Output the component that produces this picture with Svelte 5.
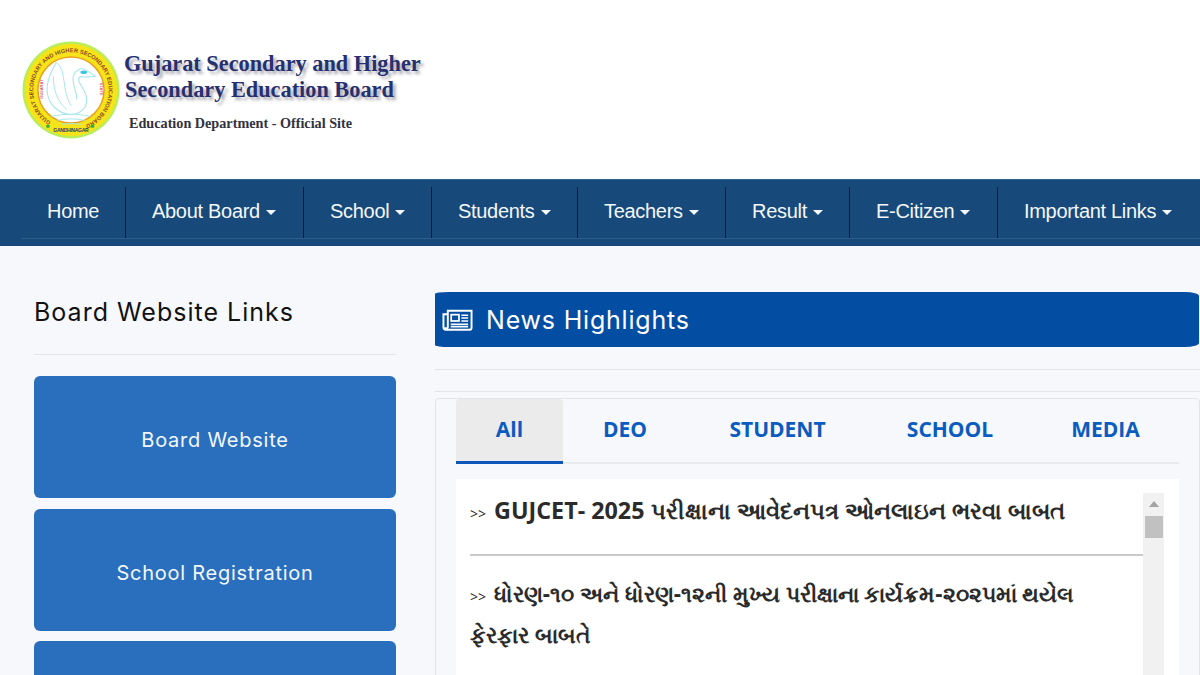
<script>
    const navItems = [
        { label: 'Home', width: 104, caret: false },
        { label: 'About Board', width: 178, caret: true },
        { label: 'School', width: 128, caret: true },
        { label: 'Students', width: 146, caret: true },
        { label: 'Teachers', width: 148, caret: true },
        { label: 'Result', width: 124, caret: true },
        { label: 'E-Citizen', width: 148, caret: true },
        { label: 'Important Links', width: 203, caret: true }
    ];

    const tabs = [
        { label: 'All', width: 107 },
        { label: 'DEO', width: 124 },
        { label: 'STUDENT', width: 181 },
        { label: 'SCHOOL', width: 164 },
        { label: 'MEDIA', width: 147 }
    ];

    // third card runs off the bottom of the page before its label shows
    const links = ['Board Website', 'School Registration', ''];

    const news = [
        'GUJCET- 2025 પરીક્ષાના આવેદનપત્ર ઓનલાઇન ભરવા બાબત',
        'ધોરણ-૧૦ અને ધોરણ-૧૨ની મુખ્ય પરીક્ષાના કાર્યક્રમ-૨૦૨૫માં થયેલ ફેરફાર બાબતે'
    ];
</script>

<div class="page">
    <header class="top">
        <svg class="seal" viewBox="0 0 100 100" aria-hidden="true">
            <defs>
                <path id="ring" d="M50 50 m-38.5 0 a38.5 38.5 0 1 1 77 0 a38.5 38.5 0 1 1 -77 0" />
            </defs>
            <circle cx="50" cy="50" r="49.5" fill="#b9ee5a" />
            <circle cx="50" cy="50" r="47" fill="#f6e31a" />
            <circle cx="50" cy="50" r="34.5" fill="#e8a020" />
            <circle cx="50" cy="50" r="33" fill="#fff" />
            <text class="ring-text" font-size="5.8" transform="rotate(-58 50 50)">
                <textPath href="#ring" textLength="205">GUJARAT SECONDARY AND HIGHER SECONDARY EDUCATION BOARD</textPath>
            </text>
            <text class="ring-small" x="50" y="92.5" font-size="5.2" text-anchor="middle" textLength="36">GANDHINAGAR</text>
            <circle cx="26.5" cy="87" r="1.8" fill="#2bb24c" />
            <circle cx="72" cy="87" r="1.8" fill="#2bb24c" />
            <path d="M35 22 C28 34 24 44 26 54 C28 66 38 74 49 75 C60 75 66 68 66 60 C66 52 60 46 58 41 C57 37 60 35 64 37 L75 36 L66 30 C60 26 53 30 52 38 C52 46 56 52 56 60" fill="none" stroke="#a6e6ee" stroke-width="1.1" />
            <path d="M35 22 C46 30 40 50 50 66 M32 36 C32 50 36 62 46 70" fill="none" stroke="#a6e6ee" stroke-width="1" />
            <path d="M30 77 C42 74 58 74 70 77 M36 81 C44 79 56 79 64 81 M40 85 C46 84 54 84 60 85" fill="none" stroke="#a6e6ee" stroke-width="1" />
            <ellipse cx="63" cy="32" rx="3.4" ry="1.8" fill="#38c5e6" />
            <text class="side" x="21" y="49" font-size="4.2" transform="rotate(-90 21 49)" text-anchor="middle">GUJARAT</text>
            <text class="side" x="80" y="49" font-size="4.2" transform="rotate(90 80 49)" text-anchor="middle">STATE</text>
        </svg>
        <div class="brand">
            <div class="brand-name">Gujarat Secondary and Higher</div>
            <div class="brand-name second">Secondary Education Board</div>
            <div class="brand-sub">Education Department - Official Site</div>
        </div>
    </header>

    <nav class="nav">
        <ul class="nav-list">
            {#each navItems as item, i}
                <li class="nav-item" class:first={i === 0} style="width: {item.width}px">
                    {item.label}{#if item.caret}<span class="caret"></span>{/if}
                </li>
            {/each}
        </ul>
    </nav>

    <main class="content">
        <aside class="side-col">
            <h2 class="side-title">Board Website Links</h2>
            <hr class="rule" />
            <div class="link-list">
                {#each links as link}
                    <a class="link-card" href="#top">{link}</a>
                {/each}
            </div>
        </aside>

        <section class="main-col">
            <div class="banner">
                <svg class="news-icon" viewBox="0 1 32 22" aria-hidden="true">
                    <path d="M6 2.5 H30.5 V20 a2 2 0 0 1 -2 2 H4 a2.5 2.5 0 0 1 -2.5 -2.5 V6 H6 Z M6 6 V19.5 a1.2 1.2 0 0 1 -2.4 0" fill="none" stroke="#fff" stroke-width="2" />
                    <rect x="9.5" y="6.5" width="8" height="6.5" fill="none" stroke="#fff" stroke-width="1.8" />
                    <path d="M20 7 H27 M20 10 H27 M20 13 H27 M9 16.5 H27 M9 19 H27" stroke="#fff" stroke-width="1.6" />
                </svg>
                <h2 class="banner-title">News Highlights</h2>
            </div>
            <hr class="rule gap-a" />
            <hr class="rule gap-b" />

            <div class="card">
                <div class="tabs">
                    {#each tabs as tab, i}
                        <div class="tab" class:active={i === 0} style="width: {tab.width}px">{tab.label}</div>
                    {/each}
                </div>
                <div class="news-box">
                    <ul class="news-list">
                        {#each news as row}
                            <li class="news-row"><span class="arrows">&gt;&gt;</span> {row}</li>
                        {/each}
                    </ul>
                    <div class="scrollbar">
                        <span class="scroll-up"></span>
                        <span class="scroll-thumb"></span>
                    </div>
                </div>
            </div>
        </section>
    </main>
</div>

<style>
    :global(body) {
        margin: 0;
        background: #f6f8fb;
    }

    .page {
        width: 1200px;
        height: 675px;
        overflow: hidden;
        background: #f6f8fb;
        font-family: "Open Sans", "Noto Sans", sans-serif;
    }

    /* header */
    .top {
        height: 179px;
        background: #fff;
        display: flex;
        align-items: flex-start;
        box-sizing: border-box;
        padding: 40px 0 0 22px;
    }

    .seal {
        width: 98px;
        height: 100px;
        flex: none;
    }

    .ring-text {
        font-family: "Liberation Sans", sans-serif;
        font-weight: 700;
        fill: #8f4a22;
    }

    .ring-small {
        font-family: "Liberation Sans", sans-serif;
        font-weight: 700;
        fill: #34406f;
    }

    .side {
        font-family: "Liberation Sans", sans-serif;
        font-weight: 700;
        fill: #d9505a;
    }

    .brand {
        padding: 11px 0 0 4px;
        font-family: "Liberation Serif", serif;
        font-weight: 700;
    }

    .brand-name {
        font-size: 22.3px;
        line-height: 26px;
        color: #27306f;
        white-space: nowrap;
        text-shadow: 3px 3px 3px rgba(70, 70, 90, 0.45);
    }

    .brand-name.second {
        padding-left: 1px;
    }

    .brand-sub {
        margin: 12px 0 0 5px;
        font-size: 14.2px;
        line-height: 16px;
        color: #33333f;
        white-space: nowrap;
    }

    /* nav */
    .nav {
        height: 67px;
        background: #17497a;
        box-sizing: border-box;
        border-top: 1px solid #2f5f8d;
        padding: 7px 0 0 21px;
    }

    .nav-list {
        list-style: none;
        margin: 0;
        padding: 0;
        display: flex;
        height: 51px;
        border-bottom: 1px solid #2d5c8a;
    }

    .nav-item {
        flex: none;
        box-sizing: border-box;
        height: 51px;
        padding-left: 26px;
        border-left: 1px solid #07192e;
        color: #f4f7fb;
        font-family: "Liberation Sans", Arial, sans-serif;
        font-size: 20px;
        line-height: 49px;
        letter-spacing: -0.3px;
        white-space: nowrap;
    }

    .nav-item.first {
        border-left: 0;
    }

    .caret {
        display: inline-block;
        margin-left: 6px;
        vertical-align: 3px;
        border-top: 5px solid #f4f7fb;
        border-left: 5px solid transparent;
        border-right: 5px solid transparent;
    }

    /* body columns */
    .content {
        display: flex;
        padding: 46px 0 0 34px;
        gap: 39px;
    }

    .side-col {
        width: 362px;
        flex: none;
    }

    .side-title {
        margin: 0;
        height: 62px;
        font-family: Inter, "Open Sans", sans-serif;
        font-size: 25px;
        font-weight: 400;
        line-height: 40px;
        letter-spacing: 1px;
        color: #111;
    }

    .rule {
        margin: 0;
        border: 0;
        border-top: 1px solid #e3e5e8;
    }

    .link-list {
        display: flex;
        flex-direction: column;
        gap: 10.5px;
        margin-top: 21px;
    }

    .link-card {
        height: 122px;
        box-sizing: border-box;
        padding-top: 6px;
        display: flex;
        align-items: center;
        justify-content: center;
        background: #2a6fbd;
        border-radius: 6px;
        color: #f2f7fd;
        text-decoration: none;
        font-family: Inter, "Open Sans", sans-serif;
        font-size: 20px;
        letter-spacing: 0.75px;
    }

    .main-col {
        width: 765px;
        flex: none;
    }

    .banner {
        height: 55px;
        display: flex;
        align-items: center;
        gap: 13px;
        padding-left: 7px;
        margin-right: 1px;
        background: #034ea2;
        border-radius: 14px / 2px 4px 4px 2px;
    }

    .news-icon {
        width: 31px;
        height: 22px;
    }

    .banner-title {
        margin: 0;
        font-family: Inter, "Open Sans", sans-serif;
        font-size: 25px;
        font-weight: 400;
        letter-spacing: 0.8px;
        color: #fff;
    }

    .gap-a {
        margin-top: 22px;
    }

    .gap-b {
        margin-top: 21px;
    }

    .card {
        margin-top: 6px;
        height: 300px;
        box-sizing: border-box;
        border: 1px solid #e2e4e8;
        border-radius: 4px;
        padding: 0 20px;
    }

    .tabs {
        display: flex;
        height: 65px;
        box-sizing: border-box;
        border-bottom: 2px solid #e8eaed;
    }

    .tab {
        flex: none;
        height: 65px;
        box-sizing: border-box;
        display: flex;
        align-items: center;
        justify-content: center;
        padding-bottom: 6px;
        color: #0b5cc0;
        font-family: "Open Sans", sans-serif;
        font-size: 21px;
        font-weight: 700;
    }

    .tab.active {
        background: #ebebeb;
        border-radius: 4px 4px 0 0;
        padding-bottom: 3px;
        border-bottom: 3px solid #0b56b8;
    }

    .news-box {
        margin-top: 15px;
        height: 230px;
        box-sizing: border-box;
        background: #fff;
        display: flex;
        align-items: flex-start;
        padding: 12px 15px 0 14px;
    }

    .news-list {
        list-style: none;
        margin: 0;
        padding: 0;
        width: 673px;
        flex: none;
    }

    .news-row {
        font-family: "Open Sans", "Noto Sans", sans-serif;
        font-size: 22.4px;
        font-weight: 700;
        line-height: 38px;
        color: #2b2b2b;
        padding: 0 30px 23px 0;
    }

    .news-row:first-child {
        font-size: 23.3px;
        line-height: 39px;
        height: 39px;
        padding: 0 0 24px;
        border-bottom: 2px solid #c9c9c9;
        margin-bottom: 19px;
        white-space: nowrap;
    }

    .arrows {
        font-size: 14px;
        font-weight: 400;
        margin-right: 2px;
    }

    .scrollbar {
        width: 21px;
        height: 200px;
        margin-top: 2px;
        flex: none;
        background: #f1f1f1;
        display: flex;
        flex-direction: column;
        align-items: center;
    }

    .scroll-up {
        margin-top: 8px;
        border-bottom: 6px solid #a3a3a3;
        border-left: 5px solid transparent;
        border-right: 5px solid transparent;
    }

    .scroll-thumb {
        width: 18px;
        height: 22px;
        margin-top: 9px;
        background: #c1c1c1;
    }
</style>
